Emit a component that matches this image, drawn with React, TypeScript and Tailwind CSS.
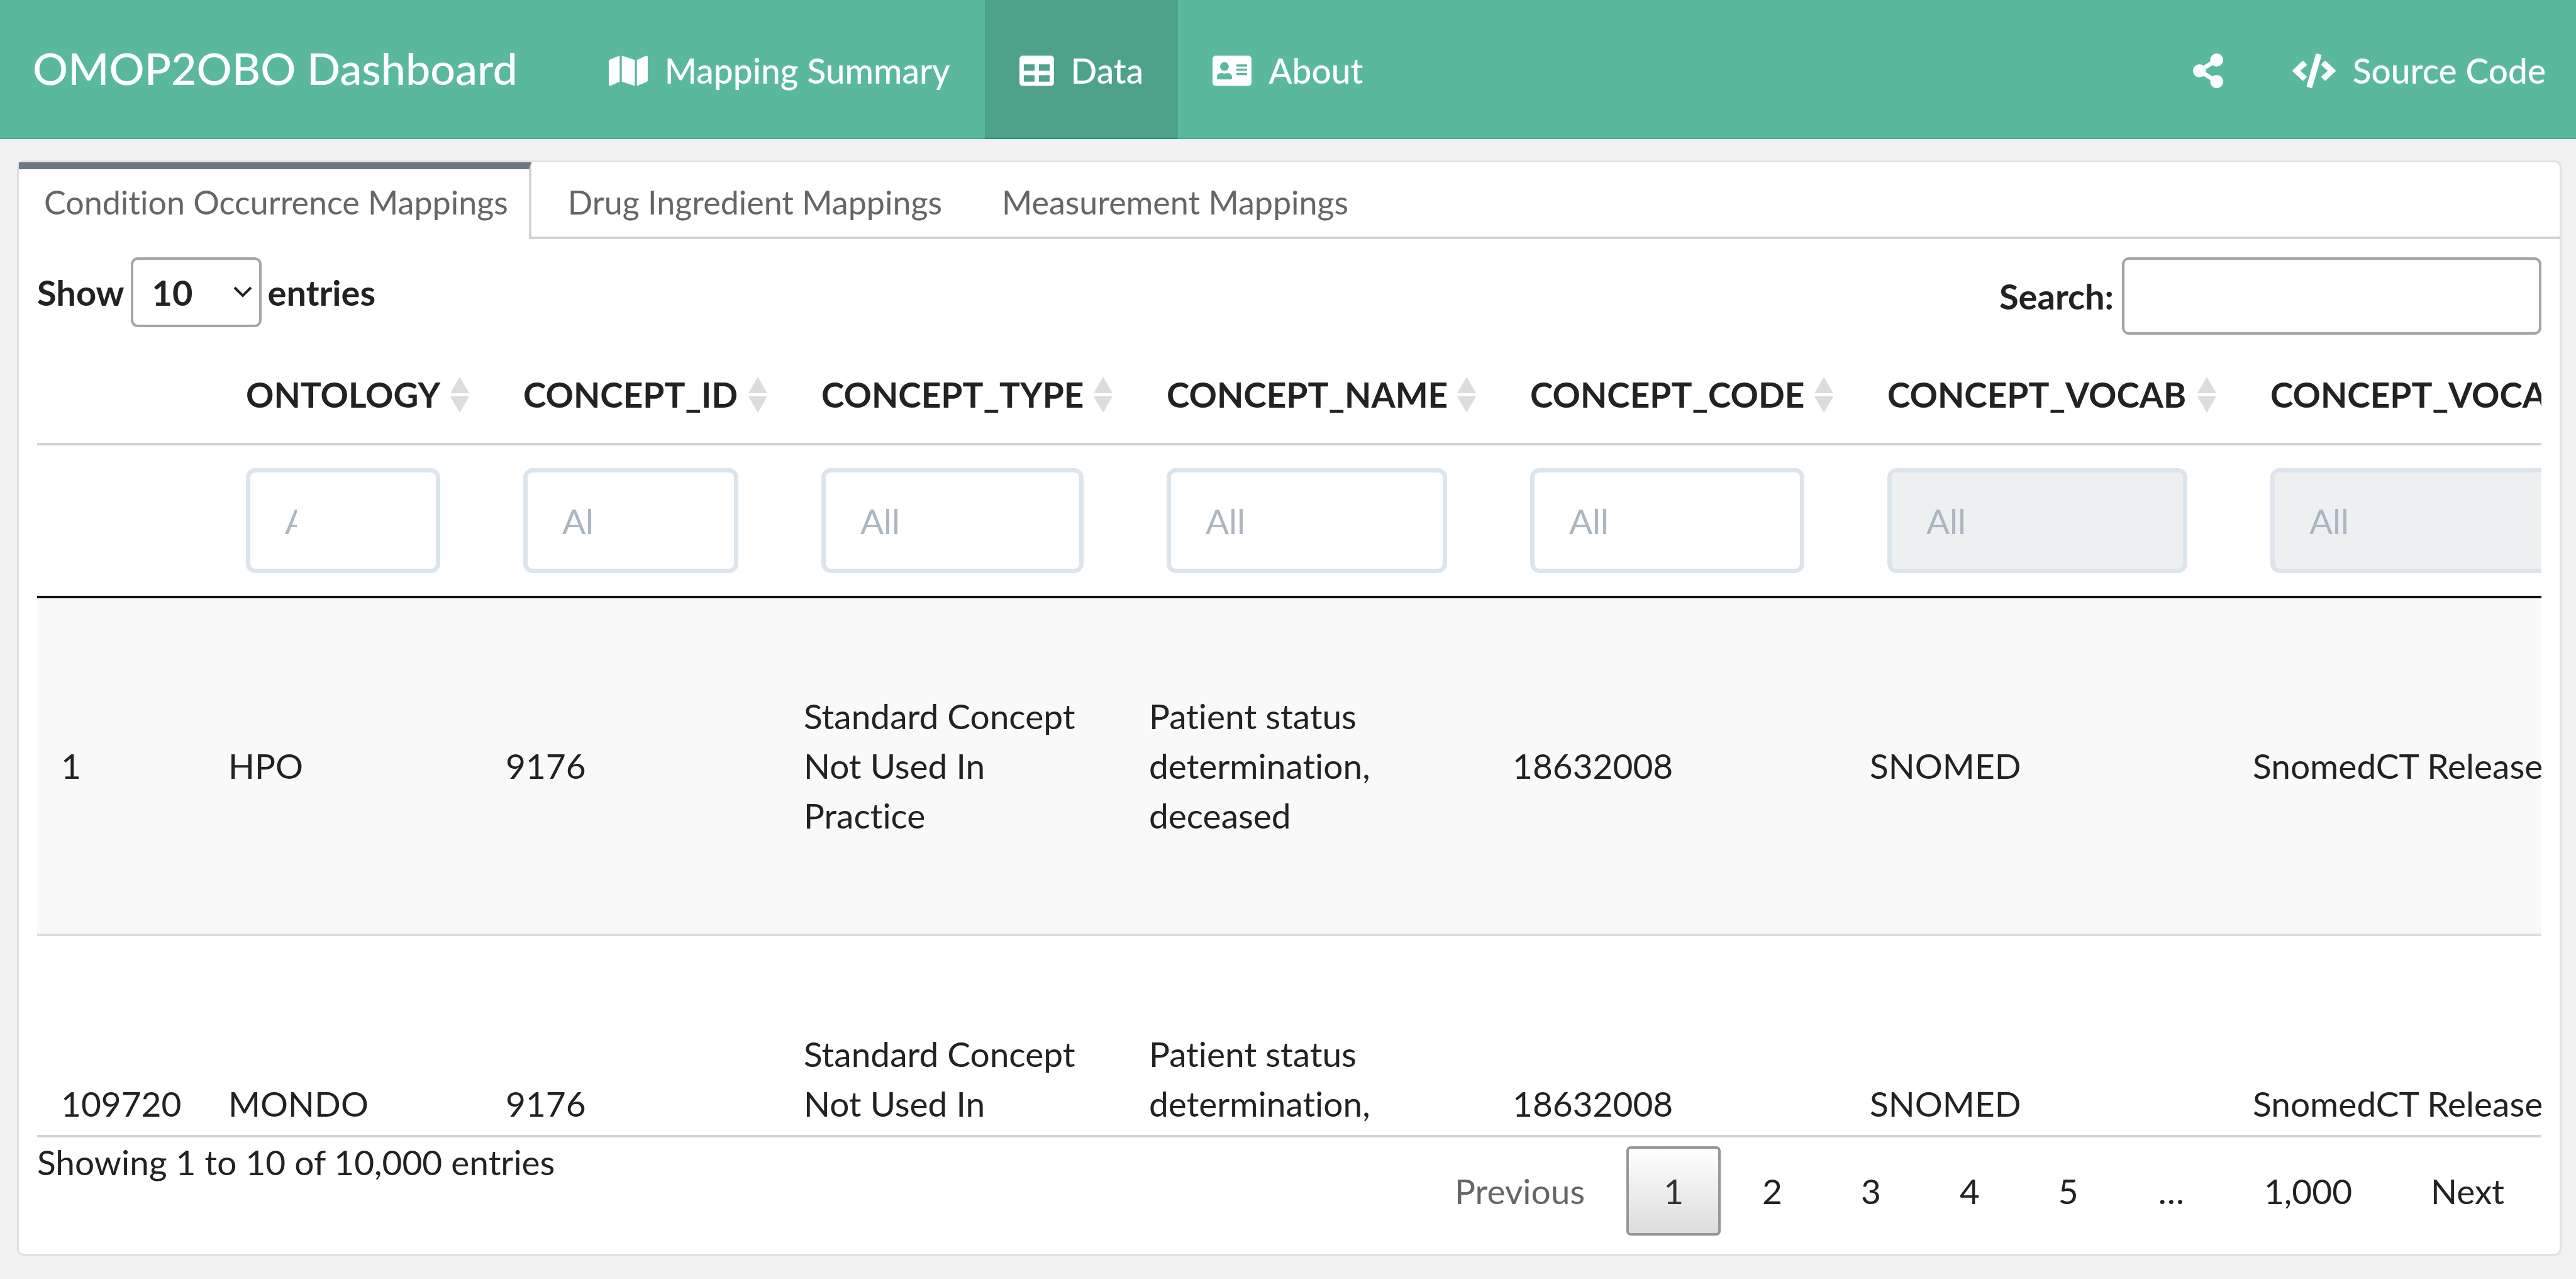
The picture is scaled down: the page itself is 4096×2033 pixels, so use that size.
import type { ReactNode } from "react";
import { FaAddressCard, FaCode, FaMap, FaShareAlt, FaTable } from "react-icons/fa";

type Column = { name: string; width: string; disabled?: boolean };

const columns: Column[] = [
  { name: "ONTOLOGY", width: "w-[441px]" },
  { name: "CONCEPT_ID", width: "w-[474px]" },
  { name: "CONCEPT_TYPE", width: "w-[549px]" },
  { name: "CONCEPT_NAME", width: "w-[578px]" },
  { name: "CONCEPT_CODE", width: "w-[568px]" },
  { name: "CONCEPT_VOCAB", width: "w-[609px]", disabled: true },
  { name: "CONCEPT_VOCAB_VERSION", width: "w-[941px]", disabled: true },
];

const rows: string[][] = [
  ["1", "HPO", "9176", "Standard Concept Not Used In Practice", "Patient status determination, deceased", "18632008", "SNOMED", "SnomedCT Release"],
  ["109720", "MONDO", "9176", "Standard Concept Not Used In Practice", "Patient status determination, deceased", "18632008", "SNOMED", "SnomedCT Release"],
];

function NavLink({ icon, label, active }: { icon: ReactNode; label: string; active?: boolean }) {
  return (
    <a
      href="#"
      aria-current={active ? "page" : undefined}
      className={
        "flex items-center gap-[27px] border-b-2 px-[55px] pt-[5px] " +
        (active ? "border-[#179678] bg-[#4ea28a]" : "border-[#3bb08e]")
      }
    >
      {icon}
      <span>{label}</span>
    </a>
  );
}

function Tab({ label, active }: { label: string; active?: boolean }) {
  return (
    <button
      type="button"
      role="tab"
      aria-selected={!!active}
      className={
        "-mb-1 mr-[18px] h-[122px] border-t-[11px] border-r-4 pr-[33px] pl-[40px] pb-[6px] " +
        (active ? "border-t-[#6e7784] border-r-[#d3d3d3] bg-white" : "border-transparent")
      }
    >
      {label}
    </button>
  );
}

function SortIcon() {
  return (
    <svg viewBox="0 0 30 57" className="h-[57px] w-[30px] shrink-0 fill-[#dcdcdc]" aria-hidden="true">
      <path d="M15 0 30 26H0zM15 57 30 31H0z" />
    </svg>
  );
}

function PageButton({ label, current, muted }: { label: string; current?: boolean; muted?: boolean }) {
  return (
    <button
      type="button"
      aria-current={current ? "page" : undefined}
      className={
        "h-[142px] rounded-[7px] border-4 px-[55px] " +
        (current
          ? "border-[#979797] bg-linear-to-b from-white to-[#dcdcdc] text-[#333]"
          : muted
            ? "border-transparent text-[#666]"
            : "border-transparent text-[#222]")
      }
    >
      {label}
    </button>
  );
}

export default function App() {
  return (
    <div className="flex h-screen flex-col overflow-hidden bg-[#f1f1f1] font-[Lato,sans-serif] text-[55px] leading-[79px] text-[#222] [font-variant-ligatures:none]">
      <nav className="flex h-[221px] shrink-0 bg-[#5ab99d] font-medium text-white">
        <a href="#" className="flex items-center border-b-2 border-[#3bb08e] pr-[90px] pb-[3px] pl-[52px] text-[70px]">
          OMOP2OBO Dashboard
        </a>
        <NavLink icon={<FaMap className="h-[55px] w-[62px]" />} label="Mapping Summary" />
        <NavLink icon={<FaTable className="size-[55px]" />} label="Data" active />
        <NavLink icon={<FaAddressCard className="h-[55px] w-[62px]" />} label="About" />
        <div className="grow border-b-2 border-[#3bb08e]" />
        <a href="#" aria-label="Share" className="flex items-center border-b-2 border-[#3bb08e] px-[55px] pt-[5px]">
          <FaShareAlt className="h-[55px] w-[48px]" />
        </a>
        <a href="#" className="flex items-center gap-[27px] border-b-2 border-[#3bb08e] pr-[48px] pl-[55px] pt-[5px]">
          <FaCode className="h-[55px] w-[69px]" />
          <span>Source Code</span>
        </a>
      </nav>

      <main className="mt-[34px] mr-[23px] mb-[37px] ml-[27px] flex min-h-0 grow flex-col rounded-[11px] border-[3px] border-[#e1e1e1] bg-white">
        <div role="tablist" className="flex h-[122px] shrink-0 border-b-4 border-[#d3d3d3] text-[52px] text-[#666]">
          <Tab label="Condition Occurrence Mappings" active />
          <Tab label="Drug Ingredient Mappings" />
          <Tab label="Measurement Mappings" />
        </div>

        <section className="flex min-h-0 grow flex-col p-[29px]">
          <div className="flex h-[142px] shrink-0 items-start justify-between text-[56px] font-bold">
            <label className="flex items-center gap-[10px]">
              Show
              <span className="relative">
                <select className="block h-[111px] w-[208px] appearance-none rounded-[11px] border-4 border-[#a5a5a5] bg-white pl-[30px]">
                  <option>10</option>
                  <option>25</option>
                  <option>50</option>
                  <option>100</option>
                </select>
                <svg
                  viewBox="0 0 30 18"
                  className="pointer-events-none absolute top-[46px] right-[15px] h-[18px] w-[30px] fill-none stroke-[#222]"
                  aria-hidden="true"
                >
                  <path d="M2 2 15 15 28 2" strokeWidth="4" />
                </svg>
              </span>
              entries
            </label>
            <label className="flex items-center gap-[13px]">
              Search:
              <input type="search" className="h-[123px] w-[667px] rounded-[11px] border-4 border-[#a5a5a5] bg-white px-[18px] font-normal" />
            </label>
          </div>

          <div className="min-h-0 grow overflow-hidden border-b-4 border-[#d3d3d3]">
            <table className="w-[4426px] table-fixed border-separate border-spacing-0 text-left">
              <thead>
                <tr>
                  <th className="w-[266px] border-b-4 border-[#d3d3d3]" aria-label="Row" />
                  {columns.map((c) => (
                    <th key={c.name} className={"h-[157px] border-b-4 border-[#d3d3d3] pr-[20px] pl-[66px] font-bold " + c.width}>
                      <div className="flex items-center justify-between">
                        {c.name}
                        <SortIcon />
                      </div>
                    </th>
                  ))}
                </tr>
                <tr>
                  <td className="border-b-4 border-[#111]" />
                  {columns.map((c) => (
                    <td key={c.name} className="border-b-4 border-[#111] px-[66px] py-[36px]">
                      <input
                        type="text"
                        placeholder="All"
                        aria-label={"Filter " + c.name}
                        disabled={c.disabled}
                        className="block h-[167px] w-full rounded-[15px] border-[7px] border-[#dce4ec] bg-white pr-[221px] pl-[55px] placeholder:text-[#acb6c0] disabled:bg-[#ecf0f1]"
                      />
                    </td>
                  ))}
                </tr>
              </thead>
              <tbody>
                {rows.map((row, r) => (
                  <tr key={row[0]} className={r % 2 === 0 ? "bg-[#f9f9f9]" : "bg-white"}>
                    {row.map((cell, i) => (
                      <td key={i} className="h-[537px] border-b-4 border-[#ddd] px-[38px] align-middle">
                        {cell}
                      </td>
                    ))}
                  </tr>
                ))}
              </tbody>
            </table>
          </div>

          <div className="flex shrink-0 justify-between">
            <p>Showing 1 to 10 of 10,000 entries</p>
            <div className="flex items-center gap-[7px] pt-[14px]">
              <PageButton label="Previous" muted />
              <PageButton label="1" current />
              <PageButton label="2" />
              <PageButton label="3" />
              <PageButton label="4" />
              <PageButton label="5" />
              <span className="px-[61px]">…</span>
              <PageButton label="1,000" />
              <PageButton label="Next" />
            </div>
          </div>
        </section>
      </main>
    </div>
  );
}
